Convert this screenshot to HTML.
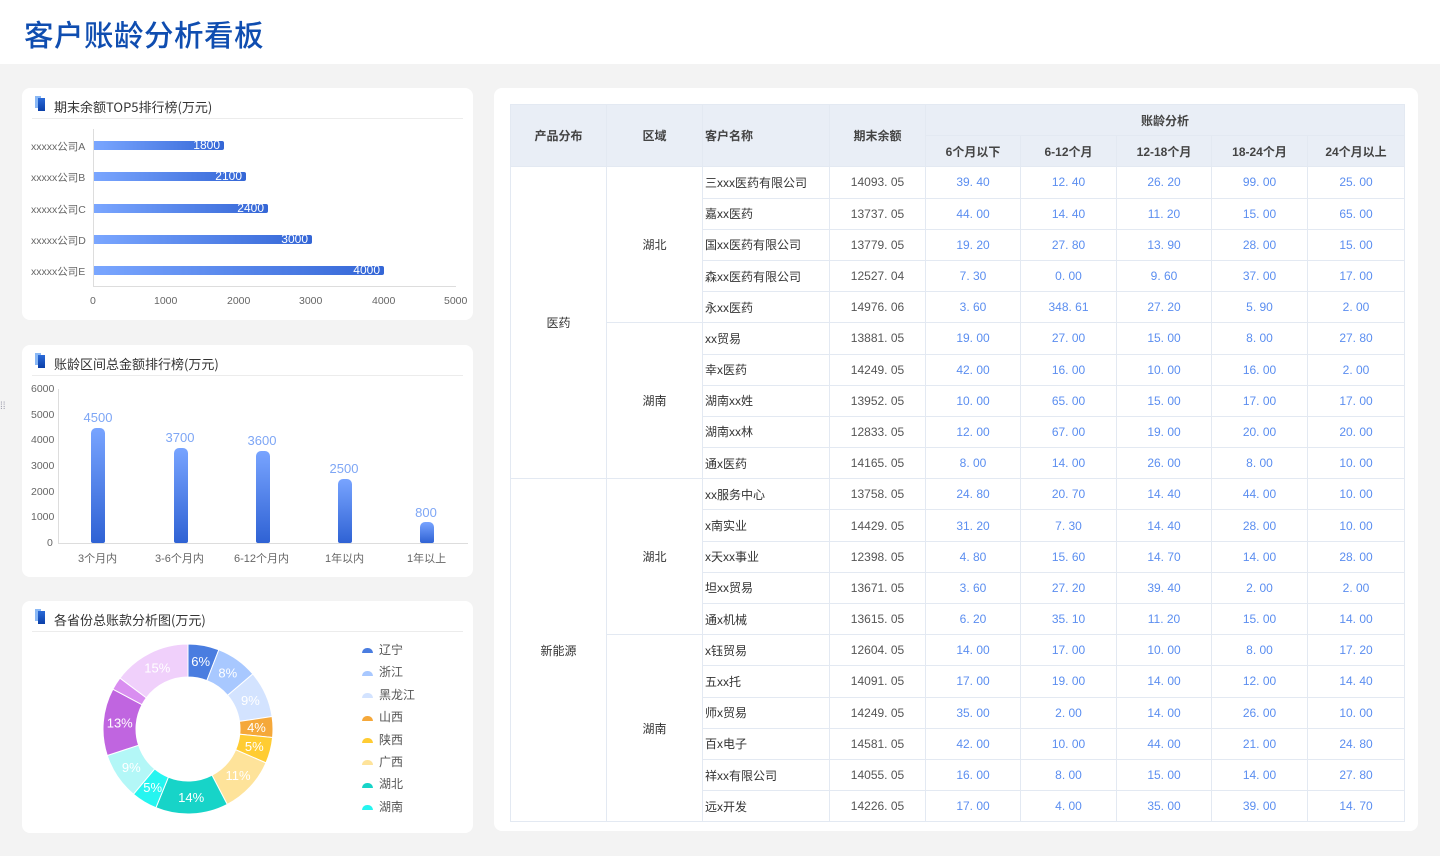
<!DOCTYPE html>
<html><head><meta charset="utf-8">
<style>
*{margin:0;padding:0;box-sizing:border-box}
body{width:1440px;height:856px;background:#f3f3f3;font-family:"Liberation Sans","Noto Sans CJK SC",sans-serif;position:relative;overflow:hidden;color:#333}
.hdr{position:absolute;left:0;top:0;width:1440px;height:64px;background:#fff}
.hdr h1{position:absolute;left:24px;top:13px;font-size:29.5px;font-weight:500;color:#0f4db0;letter-spacing:0.5px;font-family:"Noto Sans CJK SC",sans-serif}
.card{position:absolute;background:#fff;border-radius:8px}
.ct{position:absolute;left:10px;top:8px;right:10px;height:23px;border-bottom:1px solid #ececec;font-size:13px;color:#333;padding-left:22px;line-height:22px;font-family:"Noto Sans CJK SC",sans-serif}
.ico{position:absolute;left:3px;top:0px;width:10px;height:15px}
.ico:before{content:"";position:absolute;left:0;top:0;width:6px;height:12px;background:#8ab8f5}
.ico:after{content:"";position:absolute;left:3px;top:2px;width:7px;height:13px;background:linear-gradient(#2a6ad8,#0b3fa8)}
.lbl{position:absolute;font-size:10.5px;color:#666;white-space:nowrap}
.hb{position:absolute;height:9px;background:linear-gradient(90deg,#7aa6ff,#3466d6);border-radius:0 2px 2px 0;color:#fff;font-size:12px;line-height:9px;text-align:right;padding-right:4px}
.vb{position:absolute;width:14px;background:linear-gradient(#78a4ff,#2f62d4);border-radius:5px 5px 2px 2px}
.vl{position:absolute;font-size:13px;color:#7ea6f5;width:60px;text-align:center}
table{position:absolute;left:510px;top:104px;width:894px;border-collapse:collapse;font-size:12px;font-family:"Liberation Sans","Noto Sans CJK SC",sans-serif;table-layout:fixed}
td,th{border:1px solid #e3e9f2;text-align:center;height:31.2px;padding:0;white-space:nowrap}
th{background:#e9eef6;font-weight:bold;color:#444;font-size:12px}
td.n{text-align:left;padding-left:2px;color:#333}
td.b{color:#555}
td.v{color:#5b8ef0}
td.g{color:#333}
</style></head><body>
<div class="hdr"><h1>客户账龄分析看板</h1></div>

<div class="card" style="left:22px;top:88px;width:451px;height:232px">
 <div class="ct"><span class="ico"></span>期末余额TOP5排行榜(万元)</div>
</div>
<div style="position:absolute;left:93px;top:129px;width:1px;height:157px;background:#ddd"></div>
<div style="position:absolute;left:93px;top:286px;width:363px;height:1px;background:#ddd"></div>
<div class="lbl" style="left:31px;top:139px">xxxxx公司A</div>
<div class="lbl" style="left:31px;top:170px">xxxxx公司B</div>
<div class="lbl" style="left:31px;top:202px">xxxxx公司C</div>
<div class="lbl" style="left:31px;top:233px">xxxxx公司D</div>
<div class="lbl" style="left:31px;top:264px">xxxxx公司E</div>
<div class="hb" style="left:94px;top:141px;width:130px">1800</div>
<div class="hb" style="left:94px;top:172px;width:152px">2100</div>
<div class="hb" style="left:94px;top:204px;width:174px">2400</div>
<div class="hb" style="left:94px;top:235px;width:218px">3000</div>
<div class="hb" style="left:94px;top:266px;width:290px">4000</div>
<div class="lbl" style="left:90px;top:295px">0</div>
<div class="lbl" style="left:154px;top:295px">1000</div>
<div class="lbl" style="left:227px;top:295px">2000</div>
<div class="lbl" style="left:299px;top:295px">3000</div>
<div class="lbl" style="left:372px;top:295px">4000</div>
<div class="lbl" style="left:444px;top:295px">5000</div>

<div class="card" style="left:22px;top:345px;width:451px;height:232px">
 <div class="ct"><span class="ico"></span>账龄区间总金额排行榜(万元)</div>
</div>
<div style="position:absolute;left:0;top:404px;font-size:10px;color:#99a;line-height:5px">⁞⁞</div>
<div style="position:absolute;left:58px;top:389px;width:1px;height:155px;background:#ddd"></div>
<div style="position:absolute;left:58px;top:543px;width:410px;height:1px;background:#ddd"></div>
<div class="lbl" style="left:31px;top:383px">6000</div>
<div class="lbl" style="left:31px;top:409px">5000</div>
<div class="lbl" style="left:31px;top:434px">4000</div>
<div class="lbl" style="left:31px;top:460px">3000</div>
<div class="lbl" style="left:31px;top:486px">2000</div>
<div class="lbl" style="left:31px;top:511px">1000</div>
<div class="lbl" style="left:47px;top:537px">0</div>
<div class="vb" style="left:91px;top:428px;height:115px"></div>
<div class="vb" style="left:174px;top:448px;height:95px"></div>
<div class="vb" style="left:256px;top:451px;height:92px"></div>
<div class="vb" style="left:338px;top:479px;height:64px"></div>
<div class="vb" style="left:420px;top:522px;height:21px"></div>
<div class="vl" style="left:68px;top:410px">4500</div>
<div class="vl" style="left:150px;top:430px">3700</div>
<div class="vl" style="left:232px;top:433px">3600</div>
<div class="vl" style="left:314px;top:461px">2500</div>
<div class="vl" style="left:396px;top:505px">800</div>
<div class="lbl" style="left:78px;top:550px;font-size:11px">3个月内</div>
<div class="lbl" style="left:155px;top:550px;font-size:11px">3-6个月内</div>
<div class="lbl" style="left:234px;top:550px;font-size:11px">6-12个月内</div>
<div class="lbl" style="left:325px;top:550px;font-size:11px">1年以内</div>
<div class="lbl" style="left:407px;top:550px;font-size:11px">1年以上</div>

<div class="card" style="left:22px;top:601px;width:451px;height:232px">
 <div class="ct"><span class="ico"></span>各省份总账款分析图(万元)</div>
</div>
<svg id="donut" style="position:absolute;left:0;top:0" width="480" height="856"></svg>
<div style="position:absolute;left:362px;top:639px;font-size:12px;color:#555;line-height:22.4px">
<div><span style="display:inline-block;width:11px;height:5px;border-radius:5px 5px 0 0;background:#4a7de0;margin-right:6px;vertical-align:middle"></span>辽宁</div>
<div><span style="display:inline-block;width:11px;height:5px;border-radius:5px 5px 0 0;background:#a8c8ff;margin-right:6px;vertical-align:middle"></span>浙江</div>
<div><span style="display:inline-block;width:11px;height:5px;border-radius:5px 5px 0 0;background:#d3e3ff;margin-right:6px;vertical-align:middle"></span>黑龙江</div>
<div><span style="display:inline-block;width:11px;height:5px;border-radius:5px 5px 0 0;background:#f5a83a;margin-right:6px;vertical-align:middle"></span>山西</div>
<div><span style="display:inline-block;width:11px;height:5px;border-radius:5px 5px 0 0;background:#ffcc33;margin-right:6px;vertical-align:middle"></span>陕西</div>
<div><span style="display:inline-block;width:11px;height:5px;border-radius:5px 5px 0 0;background:#fee39a;margin-right:6px;vertical-align:middle"></span>广西</div>
<div><span style="display:inline-block;width:11px;height:5px;border-radius:5px 5px 0 0;background:#17d4c8;margin-right:6px;vertical-align:middle"></span>湖北</div>
<div><span style="display:inline-block;width:11px;height:5px;border-radius:5px 5px 0 0;background:#26f5f0;margin-right:6px;vertical-align:middle"></span>湖南</div>
</div>

<div class="card" style="left:494px;top:88px;width:924px;height:743px"></div>
<table>
<colgroup><col style="width:96px"><col style="width:96px"><col style="width:127px"><col style="width:96px"><col style="width:95px"><col style="width:96px"><col style="width:95px"><col style="width:96px"><col style="width:97px"></colgroup>
<tr><th rowspan="2">产品分布</th><th rowspan="2">区域</th><th rowspan="2" style="text-align:left;padding-left:2px">客户名称</th><th rowspan="2">期末余额</th><th colspan="5">账龄分析</th></tr>
<tr><th>6个月以下</th><th>6-12个月</th><th>12-18个月</th><th>18-24个月</th><th>24个月以上</th></tr>
<tbody id="tb"></tbody>
</table>
<script>
var rows=[
["三xxx医药有限公司","14093.05","39.40","12.40","26.20","99.00","25.00"],
["嘉xx医药","13737.05","44.00","14.40","11.20","15.00","65.00"],
["国xx医药有限公司","13779.05","19.20","27.80","13.90","28.00","15.00"],
["森xx医药有限公司","12527.04","7.30","0.00","9.60","37.00","17.00"],
["永xx医药","14976.06","3.60","348.61","27.20","5.90","2.00"],
["xx贸易","13881.05","19.00","27.00","15.00","8.00","27.80"],
["幸x医药","14249.05","42.00","16.00","10.00","16.00","2.00"],
["湖南xx姓","13952.05","10.00","65.00","15.00","17.00","17.00"],
["湖南xx林","12833.05","12.00","67.00","19.00","20.00","20.00"],
["通x医药","14165.05","8.00","14.00","26.00","8.00","10.00"],
["xx服务中心","13758.05","24.80","20.70","14.40","44.00","10.00"],
["x南实业","14429.05","31.20","7.30","14.40","28.00","10.00"],
["x天xx事业","12398.05","4.80","15.60","14.70","14.00","28.00"],
["坦xx贸易","13671.05","3.60","27.20","39.40","2.00","2.00"],
["通x机械","13615.05","6.20","35.10","11.20","15.00","14.00"],
["x钰贸易","12604.05","14.00","17.00","10.00","8.00","17.20"],
["五xx托","14091.05","17.00","19.00","14.00","12.00","14.40"],
["师x贸易","14249.05","35.00","2.00","14.00","26.00","10.00"],
["百x电子","14581.05","42.00","10.00","44.00","21.00","24.80"],
["祥xx有限公司","14055.05","16.00","8.00","15.00","14.00","27.80"],
["远x开发","14226.05","17.00","4.00","35.00","39.00","14.70"]];
var h="";
rows.forEach(function(r,i){
 h+="<tr>";
 if(i==0)h+='<td rowspan="10" class="g">医药</td>';
 if(i==10)h+='<td rowspan="11" class="g">新能源</td>';
 if(i==0||i==10)h+='<td rowspan="5" class="g">湖北</td>';
 if(i==5)h+='<td rowspan="5" class="g">湖南</td>';
 if(i==15)h+='<td rowspan="6" class="g">湖南</td>';
 h+='<td class="n">'+r[0]+'</td><td class="b">'+r[1].replace('.','. ')+'</td>';
 for(var k=2;k<7;k++)h+='<td class="v">'+r[k].replace('.','. ')+'</td>';
 h+="</tr>";
});
document.getElementById("tb").innerHTML=h;
var vals=[6,8,9,4,5,11,14,5,9,13,2.5,15],cols=["#4a7de0","#a8c8ff","#d3e3ff","#f5a83a","#ffcc33","#fee39a","#17d4c8","#26f5f0","#b3f7f7","#c065e0","#d98ef0","#f0d0fb"];
var labs=["6%","8%","9%","4%","5%","11%","14%","5%","9%","13%","","15%"];
var s=0;vals.forEach(function(v){s+=v});
var cx=188,cy=729,R=85,r=52,a=0,out="";
function pt(rad,ang){return [cx+rad*Math.sin(ang),cy-rad*Math.cos(ang)]}
vals.forEach(function(v,i){
 var a1=a+v/s*2*Math.PI,la=(a1-a)>Math.PI?1:0;
 var p1=pt(R,a),p2=pt(R,a1),p3=pt(r,a1),p4=pt(r,a);
 out+='<path d="M'+p1+' A'+R+','+R+' 0 '+la+' 1 '+p2+' L'+p3+' A'+r+','+r+' 0 '+la+' 0 '+p4+' Z" fill="'+cols[i]+'" stroke="#fff" stroke-width="1"/>';
 var m=pt((R+r)/2,(a+a1)/2);
 if(labs[i])out+='<text x="'+m[0]+'" y="'+(m[1]+4.5)+'" text-anchor="middle" font-size="13" fill="#fff" font-family="Liberation Sans,sans-serif">'+labs[i]+'</text>';
 a=a1;
});
document.getElementById("donut").innerHTML=out;
</script>
</body></html>
